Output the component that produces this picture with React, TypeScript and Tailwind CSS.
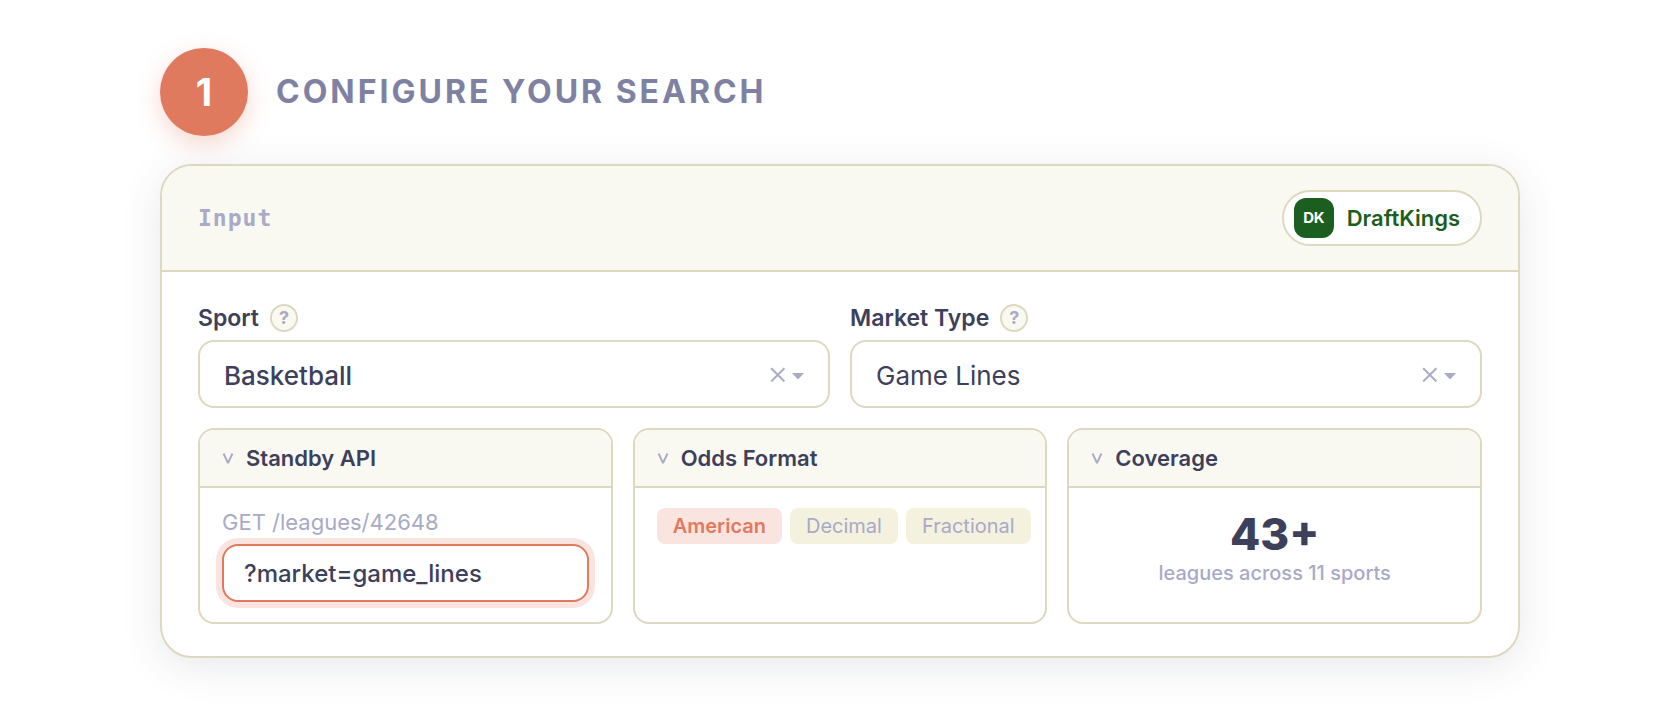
import { useState } from 'react';
import type { ReactNode } from 'react';
import { clsx } from 'clsx';

interface SelectFieldProps {
  id: string;
  label: string;
  options: string[];
  className?: string;
}

function SelectField({ id, label, options, className }: SelectFieldProps) {
  const [value, setValue] = useState(options[0]);

  return (
    <div className="flex min-w-0 flex-col gap-2">
      <div className="flex h-7 items-center gap-[11px]">
        <label htmlFor={id} className="text-[23px] leading-7 font-semibold">
          {label}
        </label>
        <button
          type="button"
          aria-label={`About ${label}`}
          className="flex size-7 items-center justify-center rounded-full border-2 border-[#ddd8c0] bg-[#faf9f1] text-lg leading-6 font-bold text-[#a8aac8]"
        >
          ?
        </button>
      </div>
      <div className="flex h-[68px] items-center rounded-2xl border-2 border-[#ddd8c0] bg-white px-6">
        <select
          id={id}
          value={value}
          onChange={(e) => setValue(e.target.value)}
          className={clsx('h-full min-w-0 flex-1 appearance-none bg-transparent pt-0.5 text-[26px] outline-none', className)}
        >
          <option value="" />
          {options.map((option) => (
            <option key={option}>{option}</option>
          ))}
        </select>
        <button type="button" aria-label={`Clear ${label}`} onClick={() => setValue('')} className="mr-1.5 text-[#a8aac8]">
          <svg className="size-4" viewBox="0 0 16 16" fill="none" stroke="currentColor" strokeWidth="2">
            <path d="M1.2 2.2l13.2 13.2M14.4 2.2L1.2 15.4" />
          </svg>
        </button>
        <svg className="h-4 w-3 text-[#a8aac8]" viewBox="0 0 12 16" fill="currentColor" aria-hidden="true">
          <path d="M0 7h12l-6 6.5z" />
        </svg>
      </div>
    </div>
  );
}

function Panel({ title, children }: { title: string; children: ReactNode }) {
  const [open, setOpen] = useState(true);

  return (
    <section className="min-w-0 overflow-hidden rounded-2xl border-2 border-[#ddd8c0] bg-white">
      <button
        type="button"
        aria-expanded={open}
        onClick={() => setOpen(!open)}
        className="flex w-full items-center gap-3 border-b-2 border-[#ddd8c0] bg-[#faf9f1] px-[22px] py-[14px] text-left text-[22px] leading-7 font-semibold"
      >
        <svg
          className={clsx('h-3 w-3 text-[#a8aac8]', !open && '-rotate-90')}
          viewBox="0 0 12 12"
          fill="none"
          stroke="currentColor"
          strokeWidth="1.9"
        >
          <path d="M1.5 1.5L6 11L10.5 1.5" strokeLinejoin="bevel" />
        </svg>
        {title}
      </button>
      {open && <div className="px-[22px] py-5">{children}</div>}
    </section>
  );
}

const formats = ['American', 'Decimal', 'Fractional'];

function OddsFormat() {
  const [active, setActive] = useState('American');

  return (
    <div className="flex gap-2">
      {formats.map((format) => (
        <button
          key={format}
          type="button"
          aria-pressed={format === active}
          onClick={() => setActive(format)}
          className={clsx(
            'h-9 rounded-lg px-4 text-xl leading-9',
            format === active
              ? 'bg-[#f9e4df] font-semibold text-[#e07a5f]'
              : 'bg-[#f4f1de] text-[#a8aac8]'
          )}
        >
          {format}
        </button>
      ))}
    </div>
  );
}

export default function App() {
  const [query, setQuery] = useState('?market=game_lines');

  return (
    <main className="min-h-screen bg-white px-6 py-12 font-['Inter',sans-serif] text-[#3d405b] xl:px-40">
      <header className="mb-7 flex items-center gap-7">
        <div className="flex size-[88px] shrink-0 items-center justify-center rounded-full bg-[#e07a5f] text-[38px] leading-10 font-bold text-white shadow-[0_8px_24px_rgba(224,122,95,0.3)]">
          1
        </div>
        <h1 className="text-[32px] leading-10 font-bold tracking-[3px] text-[#7f81a3] uppercase">
          Configure your search
        </h1>
      </header>

      <div className="overflow-hidden rounded-[32px] border-2 border-[#ddd8c0] bg-white shadow-[0_8px_40px_rgba(61,64,91,0.12)]">
        <div className="flex items-center justify-between border-b-2 border-[#ddd8c0] bg-[#faf9f1] px-9 py-6">
          <span className="font-['DejaVu_Sans_Mono',monospace] text-[23px] leading-7 font-bold tracking-[1px] text-[#a8aac8]">
            Input
          </span>
          <div className="flex h-14 items-center gap-[13px] rounded-full border-2 border-[#ddd8c0] bg-white pr-5 pl-[10px]">
            <span className="flex size-10 items-center justify-center rounded-xl bg-[#1b5e20] text-[15px] font-bold tracking-tight text-white">
              DK
            </span>
            <span className="text-[22px] leading-7 font-semibold text-[#1b5e20]">DraftKings</span>
          </div>
        </div>

        <div className="flex flex-col gap-5 px-9 py-8">
          <div className="grid grid-cols-1 gap-5 md:grid-cols-2">
            <SelectField id="sport" label="Sport" options={['Basketball', 'Football', 'Baseball']} className="font-medium" />
            <SelectField id="market" label="Market Type" options={['Game Lines', 'Player Props', 'Futures']} />
          </div>

          <div className="grid grid-cols-1 gap-5 lg:grid-cols-3">
            <Panel title="Standby API">
              <label htmlFor="query" className="mb-2 block text-[22px] leading-7 text-[#a8aac8]">
                GET /leagues/42648
              </label>
              <input
                id="query"
                type="text"
                value={query}
                onChange={(e) => setQuery(e.target.value)}
                className="block h-[58px] w-full rounded-2xl border-2 border-[#e07a5f] bg-white px-5 text-2xl font-medium ring-6 ring-[#f9e4df] outline-none"
              />
            </Panel>
            <Panel title="Odds Format">
              <OddsFormat />
            </Panel>
            <Panel title="Coverage">
              <div className="text-center">
                <p className="text-[44px] leading-[52px] font-extrabold">43+</p>
                <p className="text-xl leading-[26px] font-medium text-[#a8aac8]">leagues across 11 sports</p>
              </div>
            </Panel>
          </div>
        </div>
      </div>
    </main>
  );
}
